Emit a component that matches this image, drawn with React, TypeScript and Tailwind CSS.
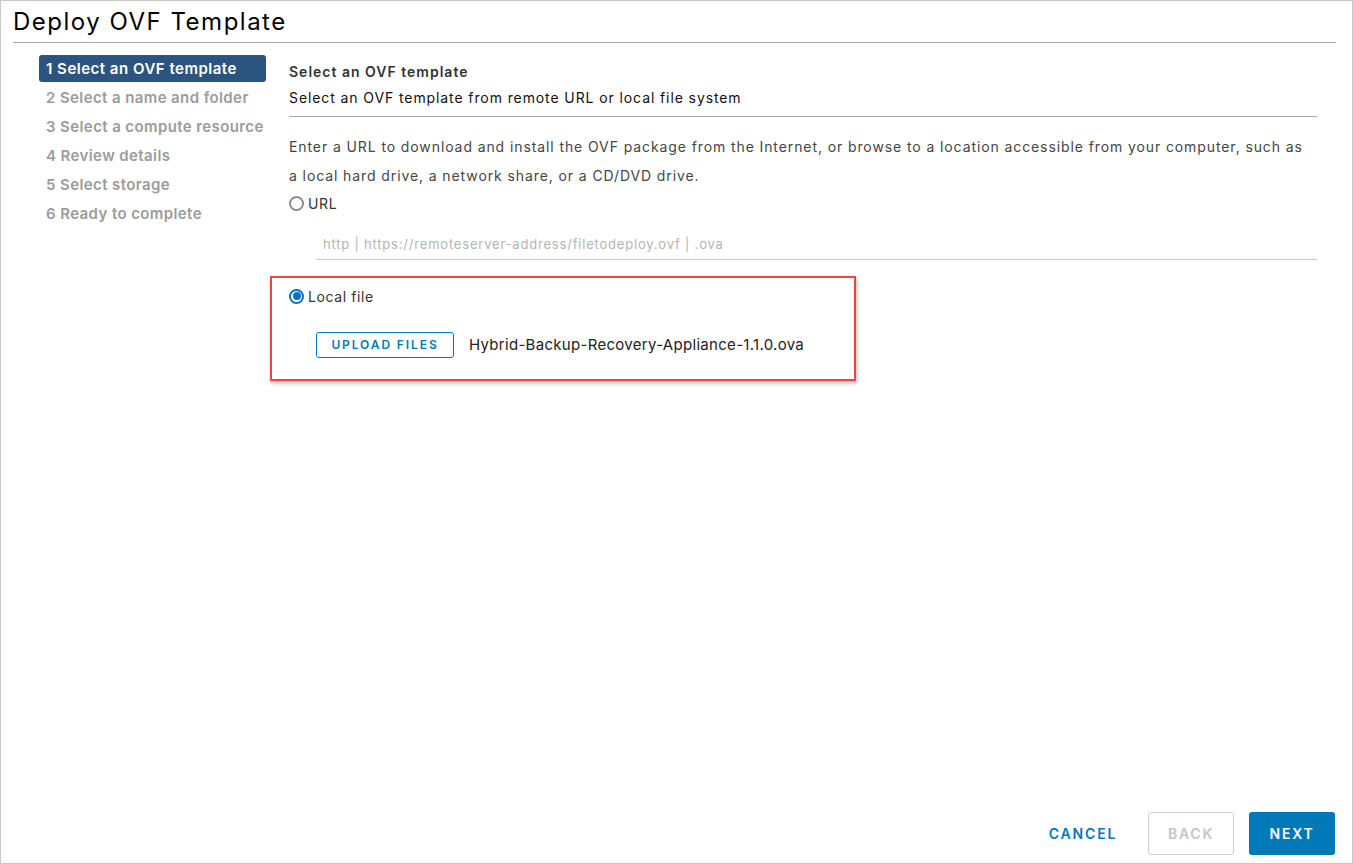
import { useState } from 'react';

const steps = [
  '1 Select an OVF template',
  '2 Select a name and folder',
  '3 Select a compute resource',
  '4 Review details',
  '5 Select storage',
  '6 Ready to complete',
];

const Radio = ({ checked }: { checked: boolean }) =>
  checked ? (
    <span className="flex h-[15px] w-[15px] items-center justify-center rounded-full border-[2px] border-[#0072c6] bg-white">
      <span className="h-[8px] w-[8px] rounded-full bg-[#0072c6]" />
    </span>
  ) : (
    <span className="h-[15px] w-[15px] rounded-full border-[2px] border-[#8a8a95] bg-white" />
  );

export default function App() {
  const [source, setSource] = useState<'url' | 'local'>('local');

  return (
    <div
      className="flex h-[864px] w-[1353px] flex-col border border-[#c8c8c8] bg-white text-[#333]"
      style={{ fontFamily: 'Inter, "Noto Sans", sans-serif' }}
    >
      <header className="mr-[16px] ml-[12px] h-[42px] border-b border-[#a6a6a6]">
        <h1 className="pt-[7px] text-[24px] leading-[28px] font-normal tracking-[1.5px] text-black">
          Deploy OVF Template
        </h1>
      </header>

      <div className="flex flex-1">
        <nav className="flex w-[265px] shrink-0 flex-col gap-[2px] pt-[12px] pl-[38px]">
          {steps.map((step, i) => (
            <div
              className={
                i === 0
                  ? 'flex h-[27px] items-center rounded-[3px] bg-[#2c5480] px-[7px] pt-[1px] text-[15px] font-semibold whitespace-nowrap tracking-[0.5px] text-white'
                  : 'flex h-[27px] items-center px-[7px] pt-[1px] text-[15px] font-semibold whitespace-nowrap tracking-[0.4px] text-[#9b9b9b]'
              }
              key={step}
            >
              {step}
            </div>
          ))}
        </nav>

        <main className="mr-[35px] ml-[23px] flex flex-1 flex-col pt-[19px]">
          <div className="border-b border-[#a6a6a6] pb-[8px]">
            <h2 className="text-[14px] leading-[20px] font-semibold tracking-[1px] text-[#333]">
              Select an OVF template
            </h2>
            <p className="mt-[6px] text-[14px] leading-[20px] tracking-[0.9px] text-[#111]">
              Select an OVF template from remote URL or local file system
            </p>
          </div>

          <p className="mt-[15px] text-[14px] leading-[29px] tracking-[0.9px] text-[#454545]">
            Enter a URL to download and install the OVF package from the Internet, or browse to a location accessible
            from your computer, such as
            <br />a local hard drive, a network share, or a CD/DVD drive.
          </p>

          <label className="flex h-[27px] cursor-pointer items-center gap-[4px] text-[14px] tracking-[0.6px] text-[#333]">
            <input
              checked={source === 'url'}
              className="hidden"
              onChange={() => setSource('url')}
              type="radio"
            />
            <Radio checked={source === 'url'} />
            URL
          </label>

          <div className="mt-[12px] ml-[27px] flex h-[31px] items-end border-b border-[#c8c8c8] px-[7px] pb-[7px] text-[13px] leading-[16px] tracking-[0.8px] text-[#b4b4b4]">
            http | https://remoteserver-address/filetodeploy.ovf | .ova
          </div>

          <div className="mt-[16px] -ml-[19px] w-[586px] border-2 border-[#ee4444] pt-[8px] pr-[17px] pb-[21px] pl-[17px] shadow-[1px_2px_4px_rgba(0,0,0,0.3)]">
            <label className="flex h-[20px] cursor-pointer items-center gap-[4px] text-[14px] tracking-[0.6px] text-[#333]">
              <input
                checked={source === 'local'}
                className="hidden"
                onChange={() => setSource('local')}
                type="radio"
              />
              <Radio checked={source === 'local'} />
              Local file
            </label>
            <div className="mt-[26px] ml-[27px] flex items-center gap-[15px]">
              <button
                className="h-[26px] w-[138px] rounded-[3px] border border-[#0079b8] text-[12px] font-semibold tracking-[1.9px] text-[#0079b8]"
                type="button"
              >
                UPLOAD FILES
              </button>
              <span className="text-[15px] tracking-[0.3px] text-[#222]">
                Hybrid-Backup-Recovery-Appliance-1.1.0.ova
              </span>
            </div>
          </div>
        </main>
      </div>

      <footer className="flex justify-end gap-[15px] pr-[17px] pb-[8px]">
        <button
          className="h-[43px] w-[100px] text-[14px] font-semibold tracking-[1.8px] text-[#0079b8]"
          type="button"
        >
          CANCEL
        </button>
        <button
          className="h-[43px] w-[86px] rounded-[3px] border border-[#cfcfcf] text-[14px] font-semibold tracking-[1.8px] text-[#c4c4c4]"
          disabled
          type="button"
        >
          BACK
        </button>
        <button
          className="h-[43px] w-[86px] rounded-[3px] bg-[#0079b8] text-[14px] font-semibold tracking-[1.8px] text-white"
          type="button"
        >
          NEXT
        </button>
      </footer>
    </div>
  );
}
